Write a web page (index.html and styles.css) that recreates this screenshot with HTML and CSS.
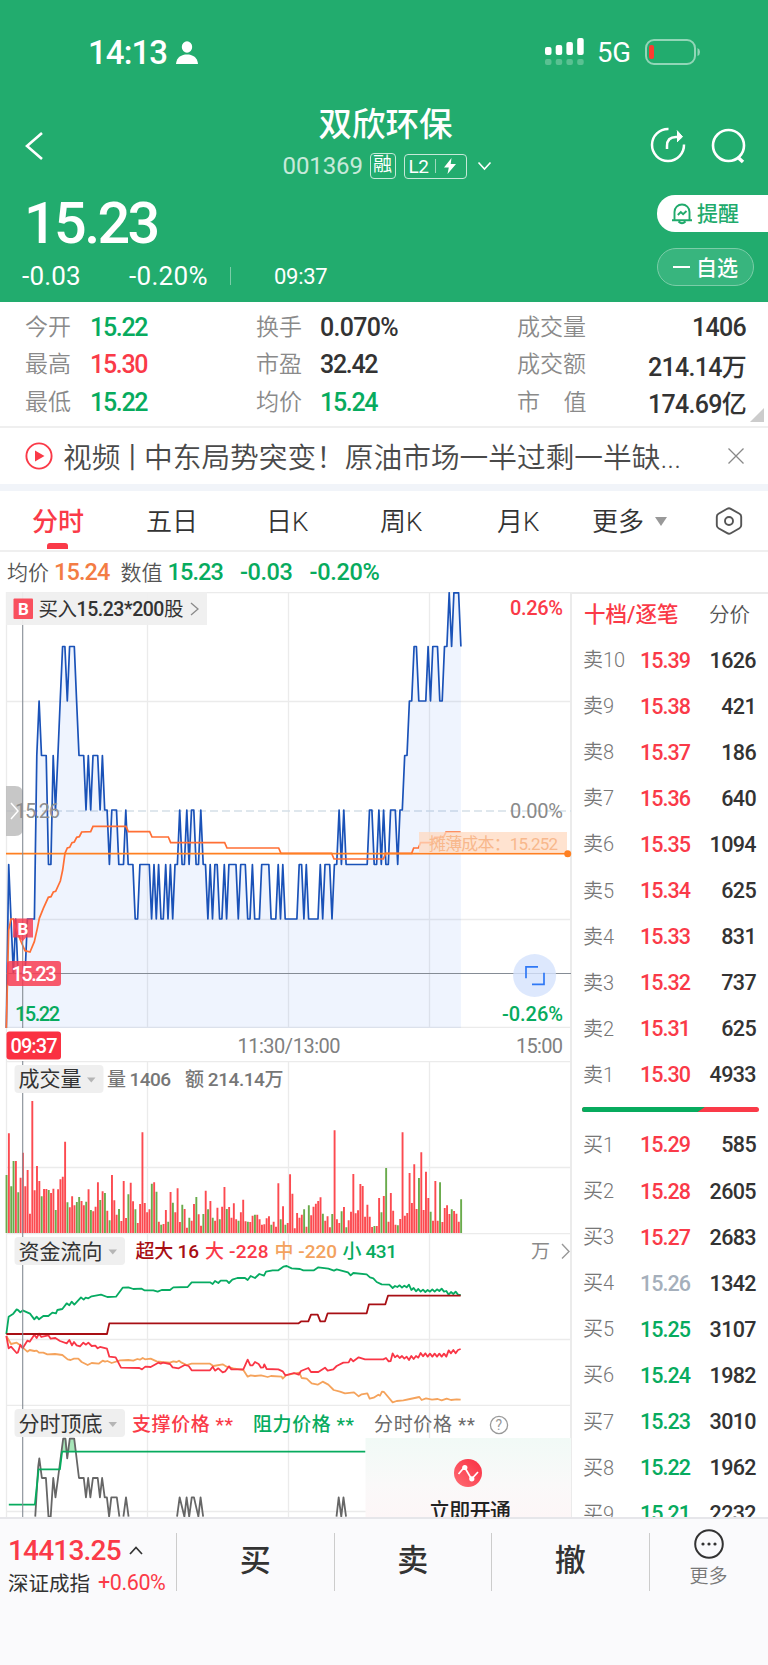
FILE: index.html
```html
<!DOCTYPE html>
<html lang="zh-CN">
<head>
<meta charset="utf-8">
<meta name="viewport" content="width=device-width">
<title>双欣环保 001369</title>
<link rel="stylesheet" href="styles.css">
</head>
<body>
<header class="hero">
  <div class="status">
    <span class="clock">14:13</span>
    <svg class="person" width="22" height="24" viewBox="0 0 22 24"><ellipse cx="11" cy="6" rx="5.2" ry="5.8" fill="#fff"/><path d="M0 22.5C1 16 5.500 13.500 11 13.500s10 2.500 11 9q0 .5-1 .5H1q-1 0-1-.5z" fill="#fff"/></svg>
    <svg class="signal" width="40" height="28" viewBox="0 0 40 28" fill="#fff"><rect x="0" y="9" width="6.500" height="8" rx="2"/><rect x="10.700" y="7" width="6.500" height="10" rx="2"/><rect x="21.400" y="4" width="6.500" height="13" rx="2"/><rect x="32.200" y="0" width="6.500" height="17" rx="2"/><g opacity=".25"><rect x="0" y="21" width="6.500" height="6" rx="2"/><rect x="10.700" y="21" width="6.500" height="6" rx="2"/><rect x="21.400" y="21" width="6.500" height="6" rx="2"/><rect x="32.200" y="21" width="6.500" height="6" rx="2"/></g></svg>
    <span class="net">5G</span>
    <svg class="battery" width="56" height="26" viewBox="0 0 56 26"><rect x="1" y="1" width="49" height="24" rx="8" fill="none" stroke="#fff" stroke-opacity=".5" stroke-width="2"/><path d="M52.500 9q2.500 1 2.500 4t-2.500 4z" fill="#fff" opacity=".5"/><rect x="4" y="6" width="5" height="14" rx="2" fill="#fb3b30"/></svg>
  </div>
  <div class="titlebar">
    <svg class="back" width="20" height="30" viewBox="0 0 20 30"><path d="M17 2 2 15l15 13" fill="none" stroke="#fff" stroke-width="2.600"/></svg>
    <div class="title">
      <h1>双欣环保</h1>
      <div class="code">
        <span class="num">001369</span><span class="margin">融</span>
        <span class="level"><span>L2</span><i></i><svg width="14" height="18" viewBox="0 0 14 18"><path d="M8.500 1 1 10.500h4.800L4.500 17 13 7H7.700z" fill="#fff"/></svg></span>
        <svg class="down" width="15" height="10" viewBox="0 0 15 10"><path d="M1.500 1.500l6 6.500 6-6.500" fill="none" stroke="#fff" stroke-width="1.600"/></svg>
      </div>
    </div>
    <svg class="share" width="36" height="36" viewBox="0 0 36 36" fill="none" stroke="#fff" stroke-width="2.500"><path d="M18.500 2A16 16 0 1 0 34 17.500"/><path d="M17 22v-3q0-9 9-9h5"/><path d="M27 3.500 32.500 9.800 27 15" fill="#fff" stroke-width="1"/></svg>
    <svg class="search" width="36" height="36" viewBox="0 0 36 36" fill="none" stroke="#fff" stroke-width="2.600"><circle cx="17.500" cy="17.500" r="15.500"/><path d="M26.500 29l5.500 5" stroke-width="3.500"/></svg>
  </div>
  <div class="quote">
    <div class="price">15.23</div>
    <div class="delta"><span>-0.03</span><span>-0.20%</span><i></i><time>09:37</time></div>
  </div>
  <div class="actions">
    <div class="remind"><svg width="22" height="22" viewBox="0 0 22 22" fill="none" stroke="#20aa6c" stroke-width="1.900"><path d="M3.500 17V9a7.500 7.500 0 0 1 15 0v8M1 17.200h20M7.500 18.500q3.500 3.500 7 0"/><path d="M6.800 12l3-3 2.300 2.200L15.500 8"/></svg><span>提醒</span></div>
    <div class="watch"><i></i><span>自选</span></div>
  </div>
</header>

<section class="stats">
  <span>今开</span><b class="g">15.22</b><span>换手</span><b class="wide">0.070%</b><span>成交量</span><b class="r-al">1406</b>
  <span>最高</span><b class="r">15.30</b><span>市盈</span><b>32.42</b><span>成交额</span><b class="r-al">214.14万</b>
  <span>最低</span><b class="g">15.22</b><span>均价</span><b class="g">15.24</b><span>市&emsp;值</span><b class="r-al">174.69亿</b>
  <i class="corner"></i>
</section>

<section class="news">
  <svg width="28" height="28" viewBox="0 0 28 28"><circle cx="14" cy="14" r="12.600" fill="none" stroke="#fa3a48" stroke-width="1.900"/><path d="M10 8.500v11l9.500-5.500z" fill="#fa3a48"/></svg>
  <p>视频<span class="bar">丨</span>中东局势突变！原油市场一半过剩一半缺...</p>
  <svg width="18" height="18" viewBox="0 0 18 18"><path d="M1.500 1.500l15 15M16.500 1.500l-15 15" stroke="#888" stroke-width="1.300"/></svg>
</section>

<nav class="tabs">
  <span class="on">分时</span><span>五日</span><span>日K</span><span>周K</span><span>月K</span><span class="more">更多<i></i></span>
  <svg width="28" height="28" viewBox="0 0 28 28" fill="none" stroke="#555" stroke-width="1.900"><path d="M12.200 1.800Q14 .8 15.800 1.800l8.700 5q1.700 1 1.700 3v8.400q0 2-1.700 3l-8.700 5q-1.800 1-3.600 0l-8.700-5q-1.700-1-1.700-3V9.800q0-2 1.700-3z"/><circle cx="14" cy="14" r="4"/></svg>
</nav>

<div class="readout"><span>均价</span><b class="o">15.24</b><span class="s2">数值</span><b class="g">15.23</b><b class="g s3">-0.03</b><b class="g s4">-0.20%</b></div>

<main class="main">
  <div class="charts">
    <svg class="pane" width="572" height="436" viewBox="0 592 572 436">
      <g class="grid"><path d="M6.500 592V1028M147.500 592V1028M288.500 592V1028M429.500 592V1028M6 592.500H571M6 701.500H571M6 919.500H571M6 1027.500H571"/></g>
      <path d="M6 811H571" stroke="#d5e0e8" stroke-width="1.500" stroke-dasharray="8 4"/>
      <path id="area" fill="#2f6ff0" fill-opacity=".08"/>
      <path id="line" class="blue"/>
      <path d="M571 973.500H6" class="cross"/>
      <g transform="translate(0 580) scale(.33333)"><path id="avg" class="avg"/></g>
      <path d="M6 853.700H568" stroke="#ff8022" stroke-width="1.700"/>
      <rect x="419" y="832" width="148" height="21" fill="#ffd9c0" fill-opacity=".75"/>
      <text class="cost" x="429" y="850" textLength="129">摊薄成本：15.252</text>
      <circle cx="567.700" cy="853.700" r="3.500" fill="#ff8022"/>
      <path d="M6 786h9q8 0 8 8v34q0 8-8 8H6z" fill="#b9b9b9" fill-opacity=".8"/>
      <path d="M11 803l7 8-7 8" fill="none" stroke="#fff" stroke-width="1.500"/>
      <text class="ax" x="15" y="818" textLength="45" fill="#8f8f8f">15.26</text>
      <path d="M22.700 592V1028" class="cross"/>
      <text class="ax m" x="510" y="615" textLength="53" fill="#fa3a48">0.26%</text>
      <text class="ax" x="510" y="818" textLength="53" fill="#8a8a8a">0.00%</text>
      <text class="ax m" x="502" y="1020.500" textLength="61" fill="#07ab5e">-0.26%</text>
      <text class="ax m" x="15" y="1020.500" textLength="45" fill="#07ab5e">15.22</text>
      <path d="M13 918.500h20v19h-7l-3.500 4-3.500-4h-6z" fill="#f83a50" fill-opacity=".82"/>
      <text x="17.500" y="934.500" class="bm" font-size="17">B</text>
      <rect x="7" y="961" width="54" height="25" rx="3" fill="#f83a50" fill-opacity=".84"/>
      <text class="ax m" x="11.500" y="980.500" textLength="45" fill="#fff">15.23</text>
      <circle cx="534.600" cy="975.500" r="21.500" fill="#d4e2fc" fill-opacity=".8"/>
      <path d="M538 966.800h-12v11.500M532 984.300h12v-11.500" fill="none" stroke="#2f78f5" stroke-width="1.700"/>
      <rect x="6" y="592" width="201" height="33" fill="#efefef" fill-opacity=".95"/>
      <rect x="13.500" y="598.500" width="19.500" height="20.500" rx="1" fill="#f9505e"/>
      <text x="18" y="615" class="bm" font-size="17">B</text>
      <text class="buy" x="38.500" y="616" textLength="145">买入<tspan class="m">15.23*200</tspan>股</text>
      <path d="M191 603l7 6-7 6" fill="none" stroke="#8a8a8a" stroke-width="1.300"/>
    </svg>
    <svg class="pane" width="572" height="33" viewBox="0 1028 572 33">
      <path d="M6.500 1028V1061" class="gl"/>
      <rect x="6.500" y="1031.500" width="54.500" height="28" rx="3" fill="#fa3142"/>
      <text class="ax m" x="10.500" y="1053" textLength="47" fill="#fff">09:37</text>
      <text class="ax" x="237.500" y="1053" textLength="103" fill="#808080">11:30/13:00</text>
      <text class="ax" x="516" y="1053" textLength="47" fill="#808080">15:00</text>
    </svg>
    <svg class="pane" width="572" height="172" viewBox="0 1061 572 172">
      <g class="grid"><path d="M6.500 1061V1233M147.500 1061V1233M288.500 1061V1233M429.500 1061V1233M6 1061.500H571M6 1167.500H571"/></g>
      <path id="volUp" stroke="#fc4a50"/><path id="volDown" stroke="#6aab4c"/>
      <path d="M22.700 1061V1233" class="cross"/>
      <rect x="14.500" y="1065" width="89" height="28" rx="4" class="tag"/>
      <text class="tagt" x="18.500" y="1086" textLength="63">成交量</text><path d="M87 1077.500h8.500l-4.200 5z" fill="#b5b5b5"/>
      <text class="lg" x="107" y="1085.500" textLength="64" fill="#777">量 1406</text>
      <text class="lg" x="185" y="1085.500" textLength="98.500" fill="#777">额 214.14万</text>
    </svg>
    <svg class="pane" width="572" height="173" viewBox="0 1233 572 173">
      <g class="grid"><path d="M6.500 1233V1406M147.500 1233V1406M288.500 1233V1406M429.500 1233V1406M6 1233.500H571M6 1339.500H571M6 1405.500H571"/></g>
      <g transform="translate(0 1260) scale(.33333)" class="flow">
        <path stroke="#f5a35c" d="M19 228L26 240 33 252 50 248 61 256 82 275 89 270 103 273 110 272 117 278 130 278 142 283 165 282 187 285 203 298 212 300 222 296 235 296 245 306 263 315 275 309 296 311 308 302 315 305 322 303 335 309 360 301 385 300 400 302 412 297 420 299 428 294 435 298 452 296 470 304 485 306 510 308 520 304 530 306 537 302 545 308 560 315 575 311 630 311 640 318 668 313 680 320 700 325 718 328 730 330 743 350 752 346 765 348 783 346 803 351 813 348 845 350 848 356 858 346 870 343 898 338 905 354 920 356 935 370 953 374 968 365 985 374 1001 390 1020 395 1035 400 1062 397 1076 409 1085 403 1102 400 1109 416 1121 413 1135 404 1140 407 1146 395 1152 396 1178 427 1190 423 1210 421 1230 417 1258 411 1265 420 1278 415 1296 419 1313 417 1325 421 1340 416 1353 420 1370 418 1382 419"/>
        <path stroke="#f93646" d="M19 228L26 265 33 260 50 279 54 277 61 254 68 265 82 242 89 245 103 224 110 234 117 221 124 231 145 226 152 236 166 234 180 243 200 250 208 240 216 256 222 246 230 256 240 259 250 248 258 254 265 248 275 258 286 257 293 265 300 261 321 266 328 290 347 292 363 323 418 324 426 328 436 320 452 321 475 308 482 311 489 308 510 312 518 322 536 325 554 315 566 318 575 331 630 331 638 320 645 332 655 325 668 337 676 334 687 319 694 328 730 328 743 299 751 316 758 316 765 306 776 312 783 323 790 322 793 313 800 327 835 328 848 334 856 346 882 339 896 344 903 333 925 324 933 336 955 336 975 323 983 332 1000 328 1010 318 1030 308 1046 307 1052 296 1060 304 1076 292 1095 298 1150 298 1158 294 1166 304 1172 303 1178 280 1185 292 1192 286 1199 294 1206 288 1213 296 1220 290 1227 300 1234 288 1241 297 1248 288 1255 293 1262 279 1269 289 1276 280 1283 290 1290 281 1297 290 1304 281 1311 290 1318 281 1325 290 1332 281 1339 290 1346 271 1353 280 1360 270 1367 280 1374 270 1382 267"/>
        <path stroke="#07ab62" d="M19 222L26 170 40 161 50 148 54 150 61 157 68 151 90 161 103 178 110 170 117 178 130 168 145 168 157 158 168 160 172 150 187 147 200 130 208 136 215 125 223 134 243 112 251 119 257 113 265 115 275 109 303 104 322 111 348 110 368 83 385 82 400 87 425 86 433 91 460 91 473 95 485 90 510 90 520 82 563 81 575 67 630 67 638 72 645 63 655 69 662 62 680 62 687 69 697 59 712 54 735 54 743 60 752 48 765 54 778 42 792 47 798 35 818 31 835 31 850 20 860 18 875 25 900 27 910 31 942 31 955 22 985 26 1002 32 1010 28 1044 37 1052 46 1060 39 1100 43 1110 52 1120 55 1130 66 1145 73 1168 74 1178 84 1185 78 1192 81 1199 76 1206 83 1213 77 1220 82 1227 74 1234 90 1241 84 1248 94 1255 87 1262 95 1269 89 1276 96 1283 90 1290 95 1297 88 1304 95 1311 88 1318 93 1325 86 1332 95 1339 93 1346 104 1353 96 1360 102 1367 95 1374 104 1382 105"/>
        <path stroke="#a80f14" d="M19 222H321L328 190H896L904 184H925L933 164H953L961 184H975L983 160H1100L1107 133H1156L1164 107H1382"/>
      </g>
      <path d="M22.700 1233V1406" class="cross"/>
      <rect x="14.500" y="1237" width="110.500" height="28" rx="4" class="tag"/>
      <text class="tagt" x="18.500" y="1258.500" textLength="84">资金流向</text><path d="M108.500 1249.500h8.500l-4.200 5z" fill="#b5b5b5"/>
      <text class="lg" x="135.500" y="1258" textLength="63.500" fill="#a80f14">超大 16</text>
      <text class="lg" x="205" y="1258" textLength="63.500" fill="#fa3a48">大 -228</text>
      <text class="lg" x="274.500" y="1258" textLength="62.500" fill="#f3a25e">中 -220</text>
      <text class="lg" x="342.500" y="1258" textLength="54.500" fill="#07ab5e">小 431</text>
      <text class="lg thin" x="531" y="1258" fill="#8a8a8a">万</text>
      <path d="M562 1244l7 7.500-7 7" fill="none" stroke="#999" stroke-width="1.400"/>
    </svg>
    <svg class="pane" width="572" height="111" viewBox="0 1406 572 111">
      <defs><linearGradient id="pg" x1="0" y1="0" x2="0" y2="1"><stop offset="0" stop-color="#f1faf6"/><stop offset=".6" stop-color="#faf9f9"/><stop offset="1" stop-color="#fdf6f7"/></linearGradient>
      <linearGradient id="rg" x1="1" y1="0" x2="0" y2="1"><stop offset="0" stop-color="#f92e42"/><stop offset="1" stop-color="#ff6d74"/></linearGradient></defs>
      <g class="grid"><path d="M6.500 1406V1517M147.500 1406V1517M288.500 1406V1517M429.500 1406V1517M6 1511.500H571"/></g>
      <g transform="translate(0 1400) scale(.36735 .33333)" class="flow">
        <path d="M168 154l5-40h7l5 40zM187 154l5-40h10l6 40z" fill="#a7e6b8"/>
        <path stroke="#666" d="M96 350L104 200 107 175 114 234H125L132 350H138L145 234 151 292 158 234 172 116H178L183 175 190 116H202L215 234H228L234 292 240 234 246 292 253 234H266L272 292 278 234 285 292H291L297 350 303 292H318L325 350M336 350L343 292 350 350M482 350L489 292 502 350 508 292 515 350 522 292H528L540 350 546 292 553 350M916 350L922 292 929 350 935 292 942 350"/>
        <path stroke="#07ab5e" d="M24 314H95L105 208H163L169 155H995"/>
      </g>
      <path d="M22.700 1406V1517" class="cross"/>
      <rect x="365.500" y="1438" width="205.500" height="79" fill="url(#pg)"/>
      <circle cx="468" cy="1473" r="14" fill="url(#rg)"/>
      <path d="M458.500 1474l6-7 7 12 6.500-7" fill="none" stroke="#fff" stroke-width="1.700"/><circle cx="464.800" cy="1467.500" r="2.600" fill="#fff"/><circle cx="471.800" cy="1478.800" r="2.600" fill="#fff"/>
      <text class="open" x="429" y="1517.500" textLength="82">立即开通</text>
      <rect x="14.500" y="1409" width="110.500" height="28" rx="4" class="tag"/>
      <text class="tagt" x="18.500" y="1430.500" textLength="84">分时顶底</text><path d="M108.500 1422h8.500l-4.200 5z" fill="#b5b5b5"/>
      <text class="lg" x="132" y="1430.500" textLength="101" fill="#fa3a48">支撑价格 **</text>
      <text class="lg" x="253" y="1430.500" textLength="101" fill="#07ab5e">阻力价格 **</text>
      <text class="lg thin" x="374" y="1430.500" textLength="101" fill="#6a6a6a">分时价格 **</text>
      <circle cx="499" cy="1425" r="8.600" fill="none" stroke="#999" stroke-width="1.300"/><text x="495.500" y="1430" class="ax q" fill="#999">?</text>
    </svg>
  </div>
  <aside class="book">
    <div class="book-head"><b>十档/逐笔</b><span>分价</span></div>
    <div id="asks"></div>
    <div class="ratio"><i></i></div>
    <div id="bids"></div>
  </aside>
</main>

<footer class="dock">
  <div class="index"><div class="idx">14413.25<svg width="14" height="9" viewBox="0 0 14 9"><path d="M1 8l6-6.500L13 8" fill="none" stroke="#333" stroke-width="1.700"/></svg></div><div class="idn">深证成指<b>+0.60%</b></div></div>
  <div class="act">买</div><div class="act">卖</div><div class="act">撤</div>
  <div class="act dots"><svg width="30" height="30" viewBox="0 0 30 30"><circle cx="15" cy="15" r="13.800" fill="none" stroke="#333" stroke-width="2"/><g fill="#333"><circle cx="9" cy="15" r="1.600"/><circle cx="15" cy="15" r="1.600"/><circle cx="21" cy="15" r="1.600"/></g></svg><span>更多</span></div>
</footer>
<script src="chart.js"></script>
</body>
</html>
```
FILE: styles.css
```css
* { box-sizing: border-box; }
body { margin: 0; width: 768px; height: 1665px; overflow: hidden; background: #fff; color: #333; font-family: Roboto, "Noto Sans CJK SC", sans-serif; }
svg { display: block; flex: none; }
i { font-style: normal; }
h1, p { margin: 0; }
b { font-weight: 500; }
.g { color: #07ab5e; }
.r { color: #fa3a48; }
.o { color: #f37c44; }

.hero { position: relative; height: 302px; background: #22ac6e; color: #fff; overflow: hidden; }
.status { display: flex; align-items: center; height: 104px; padding-top: 2px; padding-left: 88px; }
.clock { width: 80px; font: 500 33px/40px Roboto; letter-spacing: -.9px; white-space: nowrap; }
.person { margin-left: 8px; }
.signal { margin-left: 347px; margin-top: -3px; }
.net { width: 48px; margin-left: 12px; font: 400 27.500px/34px Roboto; letter-spacing: -.3px; }
.battery { margin-top: -2px; }
.titlebar { display: flex; align-items: center; height: 84px; padding: 0 21px 0 25px; }
.back { margin-right: 207px; margin-top: -1px; }
.title { width: 268px; display: flex; flex-direction: column; align-items: center; margin-top: -3px; }
.title h1 { font-size: 33.500px; line-height: 40px; font-weight: 500; }
.code { display: flex; align-items: center; width: 210px; margin-top: 3px; margin-left: 4px; height: 36px; white-space: nowrap; }
.code .num { width: 80px; font-size: 24px; letter-spacing: -.1px; opacity: .75; }
.margin { width: 26px; height: 26px; margin-left: 7px; border: 1.500px solid #c5e9d8; border-radius: 4px; font-size: 19px; line-height: 22px; text-align: center; }
.level { display: flex; align-items: center; width: 63px; height: 25px; margin-left: 8px; padding: 0 8px 0 4px; justify-content: space-between; border: 1.500px solid #c5e9d8; border-radius: 4px; font-size: 19px; letter-spacing: -.5px; }
.level i { width: 1px; height: 14px; background: #9dd9bc; }
.down { margin-left: 10px; }
.share { margin-left: 131px; margin-top: -2px; }
.search { margin-left: 25px; }
.quote { padding-left: 24px; }
.price { margin-top: 5px; height: 62px; font-size: 57.500px; line-height: 62px; font-weight: 500; letter-spacing: -2.600px; }
.delta { display: flex; align-items: center; height: 36px; margin-top: 3px; margin-left: -2px; font-size: 26px; letter-spacing: .2px; white-space: nowrap; }
.delta span:first-child { width: 107px; }
.delta span:nth-child(2) { width: 83px; letter-spacing: .3px; }
.delta i { width: 1px; height: 18px; margin-left: 18px; background: #7bcda8; }
.delta time { margin-left: 43px; font-size: 22px; letter-spacing: -.3px; }
.actions { position: absolute; right: 0; top: 195px; width: 111px; font-size: 21px; font-weight: 500; }
.actions span { margin-top: -3px; }
.remind { display: flex; align-items: center; gap: 4px; height: 37px; padding-left: 14px; background: #fff; color: #20aa6c; border-radius: 18px 0 0 18px; }
.watch { display: flex; align-items: center; gap: 6px; width: 97px; height: 38px; margin-top: 16px; padding-left: 15px; border: 1.500px solid #7bcda8; border-radius: 19px; background: #38b57e; }
.watch i { width: 17px; height: 2px; background: #fff; }

.stats { position: relative; display: grid; grid-template-columns: 65px 166px 64px 197px 100px 1fr; grid-auto-rows: 37.300px; height: 126px; padding: 7px 22px 0 25px; border-bottom: 2px solid #efefef; align-items: center; font-size: 23px; white-space: nowrap; }
.stats span { color: #8a8a8a; font-weight: 350; font-size: 23px; margin-top: -5px; }
.stats b { font-size: 25px; letter-spacing: -1.300px; }
.stats .wide { letter-spacing: -.7px; }
.stats .r-al { text-align: right; letter-spacing: -.7px; }
.corner { position: absolute; right: 4px; bottom: 4px; border-left: 14px solid transparent; border-bottom: 14px solid #ccc; }
.news { display: flex; align-items: center; height: 56px; padding: 0 23px 0 25px; }
.news p { width: 640px; margin-left: 10px; margin-top: -2px; font-size: 28.700px; font-weight: 350; color: #4a4a4a; white-space: nowrap; }
.bar { margin: 0 -2.500px; }
.news svg:last-child { margin-left: auto; }
.tabs { display: flex; align-items: center; height: 68px; padding: 0 25px 0 32px; border-top: 7px solid #f1f4f9; border-bottom: 2px solid #efefef; font-size: 26px; font-weight: 350; white-space: nowrap; }
.tabs span { position: relative; width: 116px; margin-top: -2px; }
.tabs span:nth-child(2) { width: 120px; }
.tabs span:nth-child(3) { width: 114px; }
.tabs span:nth-child(4) { width: 117px; }
.tabs span:nth-child(5) { width: 95px; }
.tabs .on { width: 114px; color: #fa3a48; font-weight: 500; }
.tabs .on::after { content: ""; position: absolute; left: 15px; bottom: -11px; width: 21px; height: 6px; border-radius: 3px 3px 0 0; background: #fa3a48; }
.more { display: flex; align-items: center; gap: 11px; }
.more i { border: 6.500px solid transparent; border-top: 9px solid #999; border-bottom: 0; margin-top: 3px; }
.tabs svg { margin-left: auto; }
.readout { display: flex; align-items: center; height: 40px; padding-left: 7px; font-size: 21px; color: #666; white-space: nowrap; }
.readout span { font-weight: 350; color: #555; margin-top: -3px; }
.readout b { margin-left: 5px; font-size: 23.500px; letter-spacing: -.9px; font-weight: 500; }
.readout .s2 { margin-left: 11px; }
.readout .s3 { margin-left: 17px; letter-spacing: -.4px; }
.readout .s4 { margin-left: 17px; letter-spacing: -.3px; }

.main { display: flex; height: 925px; overflow: hidden; }
.charts { width: 572px; border-right: 2px solid #ebebeb; }
.grid path, .gl { stroke: #ebebeb; stroke-width: 1.300; fill: none; }
.cross { stroke: #858c95; stroke-width: 1.100; fill: none; }
.blue { fill: none; stroke: #1a52b8; stroke-width: 1.700; stroke-linejoin: round; }
.avg { fill: none; stroke: #ff6f35; stroke-width: 1.700; vector-effect: non-scaling-stroke; }
.flow path[stroke] { fill: none; stroke-width: 1.800; stroke-linejoin: round; vector-effect: non-scaling-stroke; }
#volUp, #volDown { stroke-width: 1.900; }
.ax { font: 400 20px Roboto; }
.ax.m, .m { font-weight: 500; }
.ax.q { font-size: 14px; }
.bm { font-family: Roboto; font-weight: 700; fill: #fff; }
.cost { font: 400 17px Roboto, "Noto Sans CJK SC"; fill: #f8b88c; }
.buy { font: 400 19.500px Roboto, "Noto Sans CJK SC"; fill: #333; }
.tag { fill: #efefef; }
.tagt { font: 400 21px Roboto, "Noto Sans CJK SC"; fill: #333; }
.lg { font: 500 19px Roboto, "Noto Sans CJK SC"; }
.lg.thin { font-weight: 400; }
.open { font: 500 21px "Noto Sans CJK SC"; fill: #222; }

.book { width: 196px; padding: 0 12px 0 11px; border-top: 2px solid #ebebeb; }
.book-head { display: flex; justify-content: space-between; align-items: center; height: 43px; padding: 0 6px 6px 1px; font-size: 20.500px; white-space: nowrap; }
.book-head b { color: #fa3a48; font-size: 21.500px; }
.book-head span { color: #555; font-weight: 350; }
.row { display: grid; grid-template-columns: 57px 54px 1fr; align-items: center; height: 46.100px; font-size: 21.500px; white-space: nowrap; }
.row span { color: #777; font-size: 20px; font-weight: 350; margin-top: -3px; }
.row b { letter-spacing: -.95px; }
.row b:last-child { text-align: right; letter-spacing: -.6px; }
.row .flat { color: #a5afbb; }
.ratio { width: 177px; height: 5px; margin: 9px 0 10px -1px; border-radius: 3px; overflow: hidden; background: #fa3a48; }
.ratio i { display: block; width: 123px; height: 5px; background: #07ab5e; clip-path: polygon(0 0, 100% 0, 94% 100%, 0 100%); }

.dock { display: flex; height: 148px; padding-top: 14px; border-top: 2px solid #e6e6ea; background: #fafafc; }
.index { width: 176px; height: 60px; padding-left: 8px; white-space: nowrap; }
.idx { display: flex; align-items: center; gap: 8px; height: 34px; color: #fa3a48; font-size: 28px; font-weight: 500; letter-spacing: -.8px; }
.idn { display: flex; align-items: center; gap: 8px; height: 30px; font-size: 20.500px; }
.idn b { color: #fa3a48; font-size: 21.500px; letter-spacing: -.4px; font-weight: 400; }
.act { width: 157.500px; height: 58px; border-left: 1.500px solid #ccc; text-align: center; font-size: 31px; line-height: 56px; font-weight: 500; color: #333; }
.dots { display: flex; flex-direction: column; align-items: center; width: 119px; font-size: 19px; line-height: 26px; color: #777; font-weight: 350; }
.dots svg { margin-top: -4px; }
.dots span { margin-top: 5px; }
```
FILE: chart.js
```js
const X0 = 6.33, STEP = 2.3433;

// One digit per minute: cents above 15.22
const ticks = '0' + '321211112222' + '565553354' + '567767776' + '555454555454434443334333'
  + '2233333232322323233433434433433' + '23233223233332333223222' + '3333222323'
  + '222222332322222323332' + '33434' + '3333333333' + '443343433444344556677' + '66667677766778' + '7888' + '7';
const pts = [...ticks].map((t, i) => [(X0 + i * STEP).toFixed(1), (1028 - t * 54.5 + (t === '8' ? .8 : 0)).toFixed(1)]);
const d = 'M' + pts.map(p => p.join(' ')).join('L');
document.getElementById('line').setAttribute('d', d);
document.getElementById('area').setAttribute('d', d + `L${pts[pts.length - 1][0]} 1028H6.300z`);

document.getElementById('avg').setAttribute('d', 'M' + [
  19,1344,26,1050,33,1017,40,1017,50,1050,61,1080,75,1112,90,1116,103,1085,112,1045,118,1015,130,985,145,952,153,950,
  160,936,167,934,181,903,188,870,195,820,202,804,209,802,216,788,223,786,230,772,238,770,245,756,272,755,279,739,
  378,739,385,755,449,755,456,771,505,771,512,788,674,788,681,804,836,804,843,820,995,820,1002,837,1150,837,1157,820,
  1235,820,1241,804,1255,804,1262,788,1297,788,1304,772,1330,772,1338,756,1382,756].join(' '));

// Bar tops in thirds of a pixel; a negative value is a falling minute
const vol = [-375,250,-409,-333,333,-427,383,308,409,360,491,153,421,348,393,-439,417,417,-420,429,416,-480,418,388,380,275,-457,472,439,466,-456,-441,453,466,-455,418,-480,484,470,397,-450,424,-429,482,-511,375,451,494,-477,513,393,504,-433,398,454,-478,519,462,247,459,487,478,-401,397,-425,515,-524,522,480,-515,426,-458,487,415,516,-464,477,533,-503,512,462,-441,493,527,-492,422,-478,453,-503,512,473,-508,470,411,-477,471,503,460,508,-512,487,449,514,-515,516,497,-494,494,508,524,523,505,499,-524,515,530,400,-508,469,-524,519,373,431,535,489,503,494,-478,530,-466,496,470,461,453,442,-491,512,499,532,-492,241,508,519,-484,471,-532,511,485,372,490,481,402,408,500,464,500,531,-528,528,444,-487,438,-354,515,429,482,524,-526,507,247,497,489,369,459,343,477,-384,307,480,365,444,-485,512,393,512,-397,516,474,466,492,-478,483,491,515,-448];
let up = '', down = '';
vol.forEach((v, i) => {
  const s = `M${(X0 + .2 + i * STEP).toFixed(2)} 1233V${(1050 + Math.abs(v) / 3).toFixed(1)}`;
  if (v < 0) down += s; else up += s;
});
document.getElementById('volUp').setAttribute('d', up);
document.getElementById('volDown').setAttribute('d', down);

const row = (label, price, qty) => {
  const cls = price > 15.26 ? 'r' : price < 15.26 ? 'g' : 'flat';
  return `<div class="row"><span>${label}</span><b class="${cls}">${price.toFixed(2)}</b><b>${qty}</b></div>`;
};
document.getElementById('asks').innerHTML = [1626, 421, 186, 640, 1094, 625, 831, 737, 625, 4933]
  .map((q, i) => row('卖' + (10 - i), (1539 - i) / 100, q)).join('');
document.getElementById('bids').innerHTML = [585, 2605, 2683, 1342, 3107, 1982, 3010, 1962, 2232]
  .map((q, i) => row('买' + (i + 1), (1529 - i) / 100, q)).join('');
```
